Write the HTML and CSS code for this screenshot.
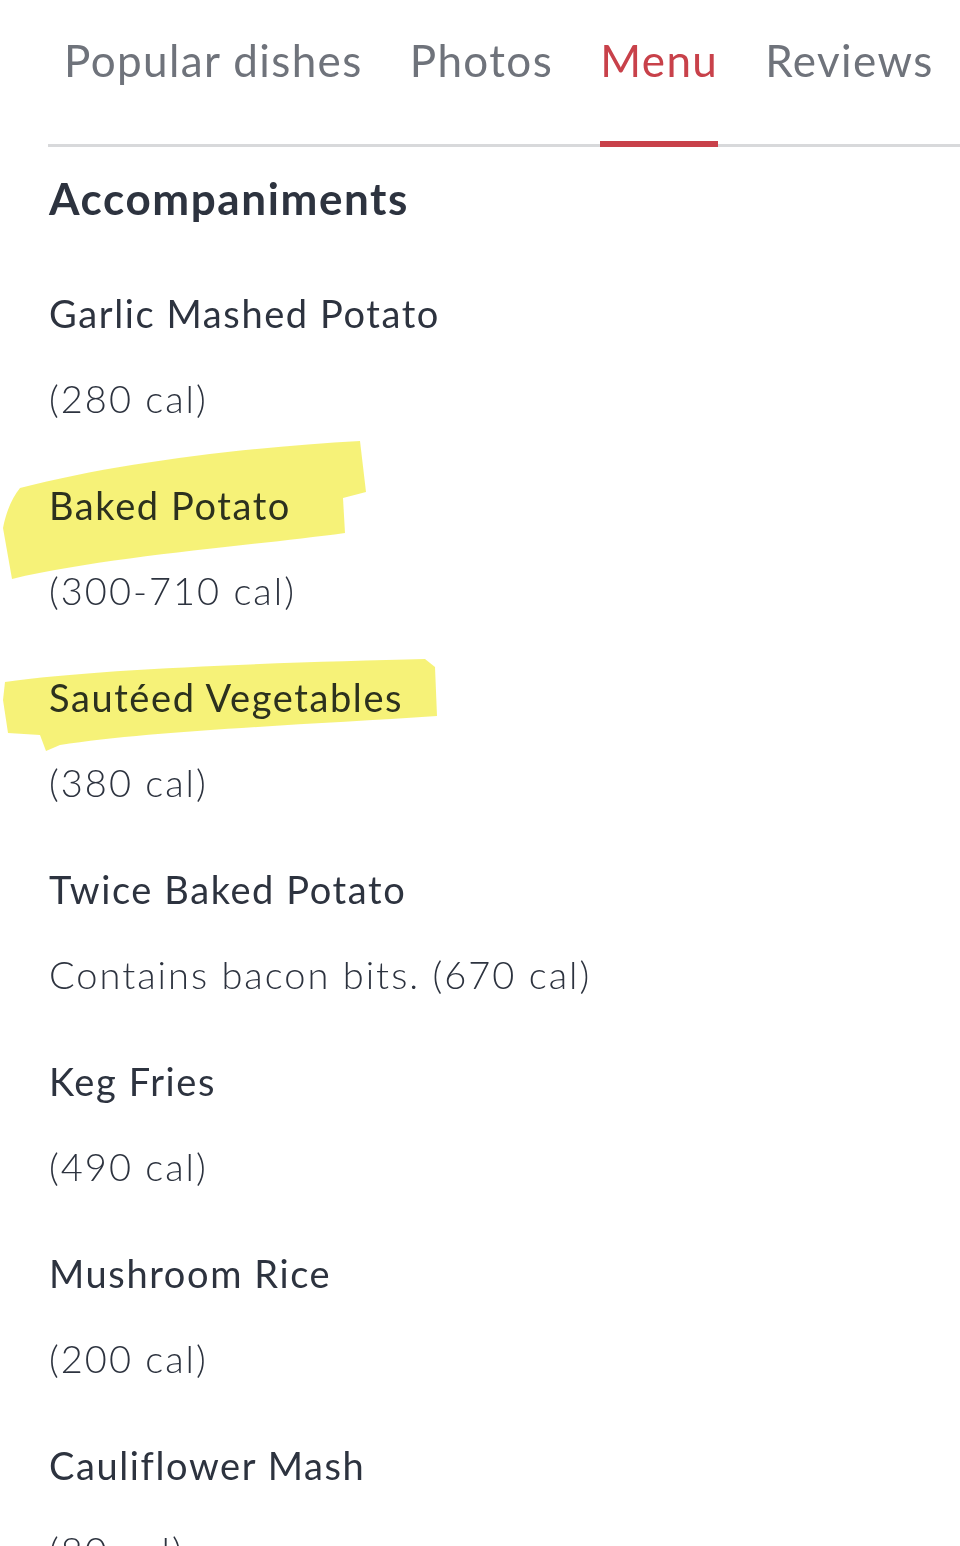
FILE: index.html
```html
<!DOCTYPE html>
<html lang="en">
<head>
<meta charset="utf-8">
<title>Menu</title>
<link rel="stylesheet" href="styles.css">
</head>
<body>
<div class="page">
  <nav class="tabs">
    <a class="tab">Popular dishes</a>
    <a class="tab">Photos</a>
    <a class="tab active">Menu</a>
    <a class="tab">Reviews</a>
  </nav>
  <section class="menu">
    <h2 class="section-title">Accompaniments</h2>
    <ul class="items">
      <li class="item"><div class="name">Garlic Mashed Potato</div><div class="desc">(280 cal)</div></li>
      <li class="item"><div class="name">Baked Potato</div><div class="desc">(300-710 cal)</div></li>
      <li class="item"><div class="name">Sautéed Vegetables</div><div class="desc">(380 cal)</div></li>
      <li class="item"><div class="name">Twice Baked Potato</div><div class="desc">Contains bacon bits. (670 cal)</div></li>
      <li class="item"><div class="name">Keg Fries</div><div class="desc">(490 cal)</div></li>
      <li class="item"><div class="name">Mushroom Rice</div><div class="desc">(200 cal)</div></li>
      <li class="item"><div class="name">Cauliflower Mash</div><div class="desc">(80 cal)</div></li>
    </ul>
  </section>
  <svg class="highlights" width="960" height="1546" viewBox="0 0 960 1546" aria-hidden="true">
    <path class="hl" d="M20 488 C120 462 250 447 360 441 L366 492 L343 498 L345 533 C250 546 110 556 12 579 L3 528 C6 512 12 498 20 488 Z"/>
    <path class="hl" d="M5 682 C100 668 300 662 425 659 L435 667 L437 716 C300 725 150 731 60 745 L46 751 L40 735 L8 733 L3 700 Z"/>
  </svg>
</div>
</body>
</html>
```
FILE: styles.css
```css
html, body {
  margin: 0;
  padding: 0;
  background: #ffffff;
}

body {
  font-family: "Lato", "Noto Sans", sans-serif;
  color: #2d333f;
  overflow: hidden;
}

.page {
  position: relative;
  width: 960px;
  height: 1546px;
  overflow: hidden;
}

.tabs {
  display: flex;
  margin-left: 48px;
  padding-left: 16px;
  border-bottom: 3px solid #d8d9db;
}

.tab {
  display: block;
  padding-top: 34px;
  padding-bottom: 55px;
  margin-right: 47px;
  font-size: 44px;
  line-height: 52px;
  letter-spacing: 1.4px;
  color: #6f737b;
  white-space: nowrap;
}

.tab.active {
  color: #c8414a;
  border-bottom: 6px solid #c8414a;
  padding-bottom: 55px;
  margin-bottom: -3px;
}

.menu {
  padding-left: 49px;
}

.section-title {
  margin: 25px 0 0;
  font-size: 44px;
  line-height: 52px;
  font-weight: 700;
  letter-spacing: 1.6px;
  color: #2d333f;
}

.items {
  list-style: none;
  margin: 67px 0 0;
  padding: 0;
}

.item {
  margin-bottom: 63px;
}

.name {
  font-size: 38px;
  line-height: 44px;
  letter-spacing: 1.6px;
  color: #2d333f;
  margin-bottom: 41px;
}

.desc {
  font-size: 38px;
  line-height: 44px;
  font-weight: 300;
  letter-spacing: 2px;
  color: #2d333f;
}

.highlights {
  position: absolute;
  top: 0;
  left: 0;
  pointer-events: none;
  mix-blend-mode: multiply;
}

.hl {
  fill: #f4f060;
  opacity: 0.85;
}
```
